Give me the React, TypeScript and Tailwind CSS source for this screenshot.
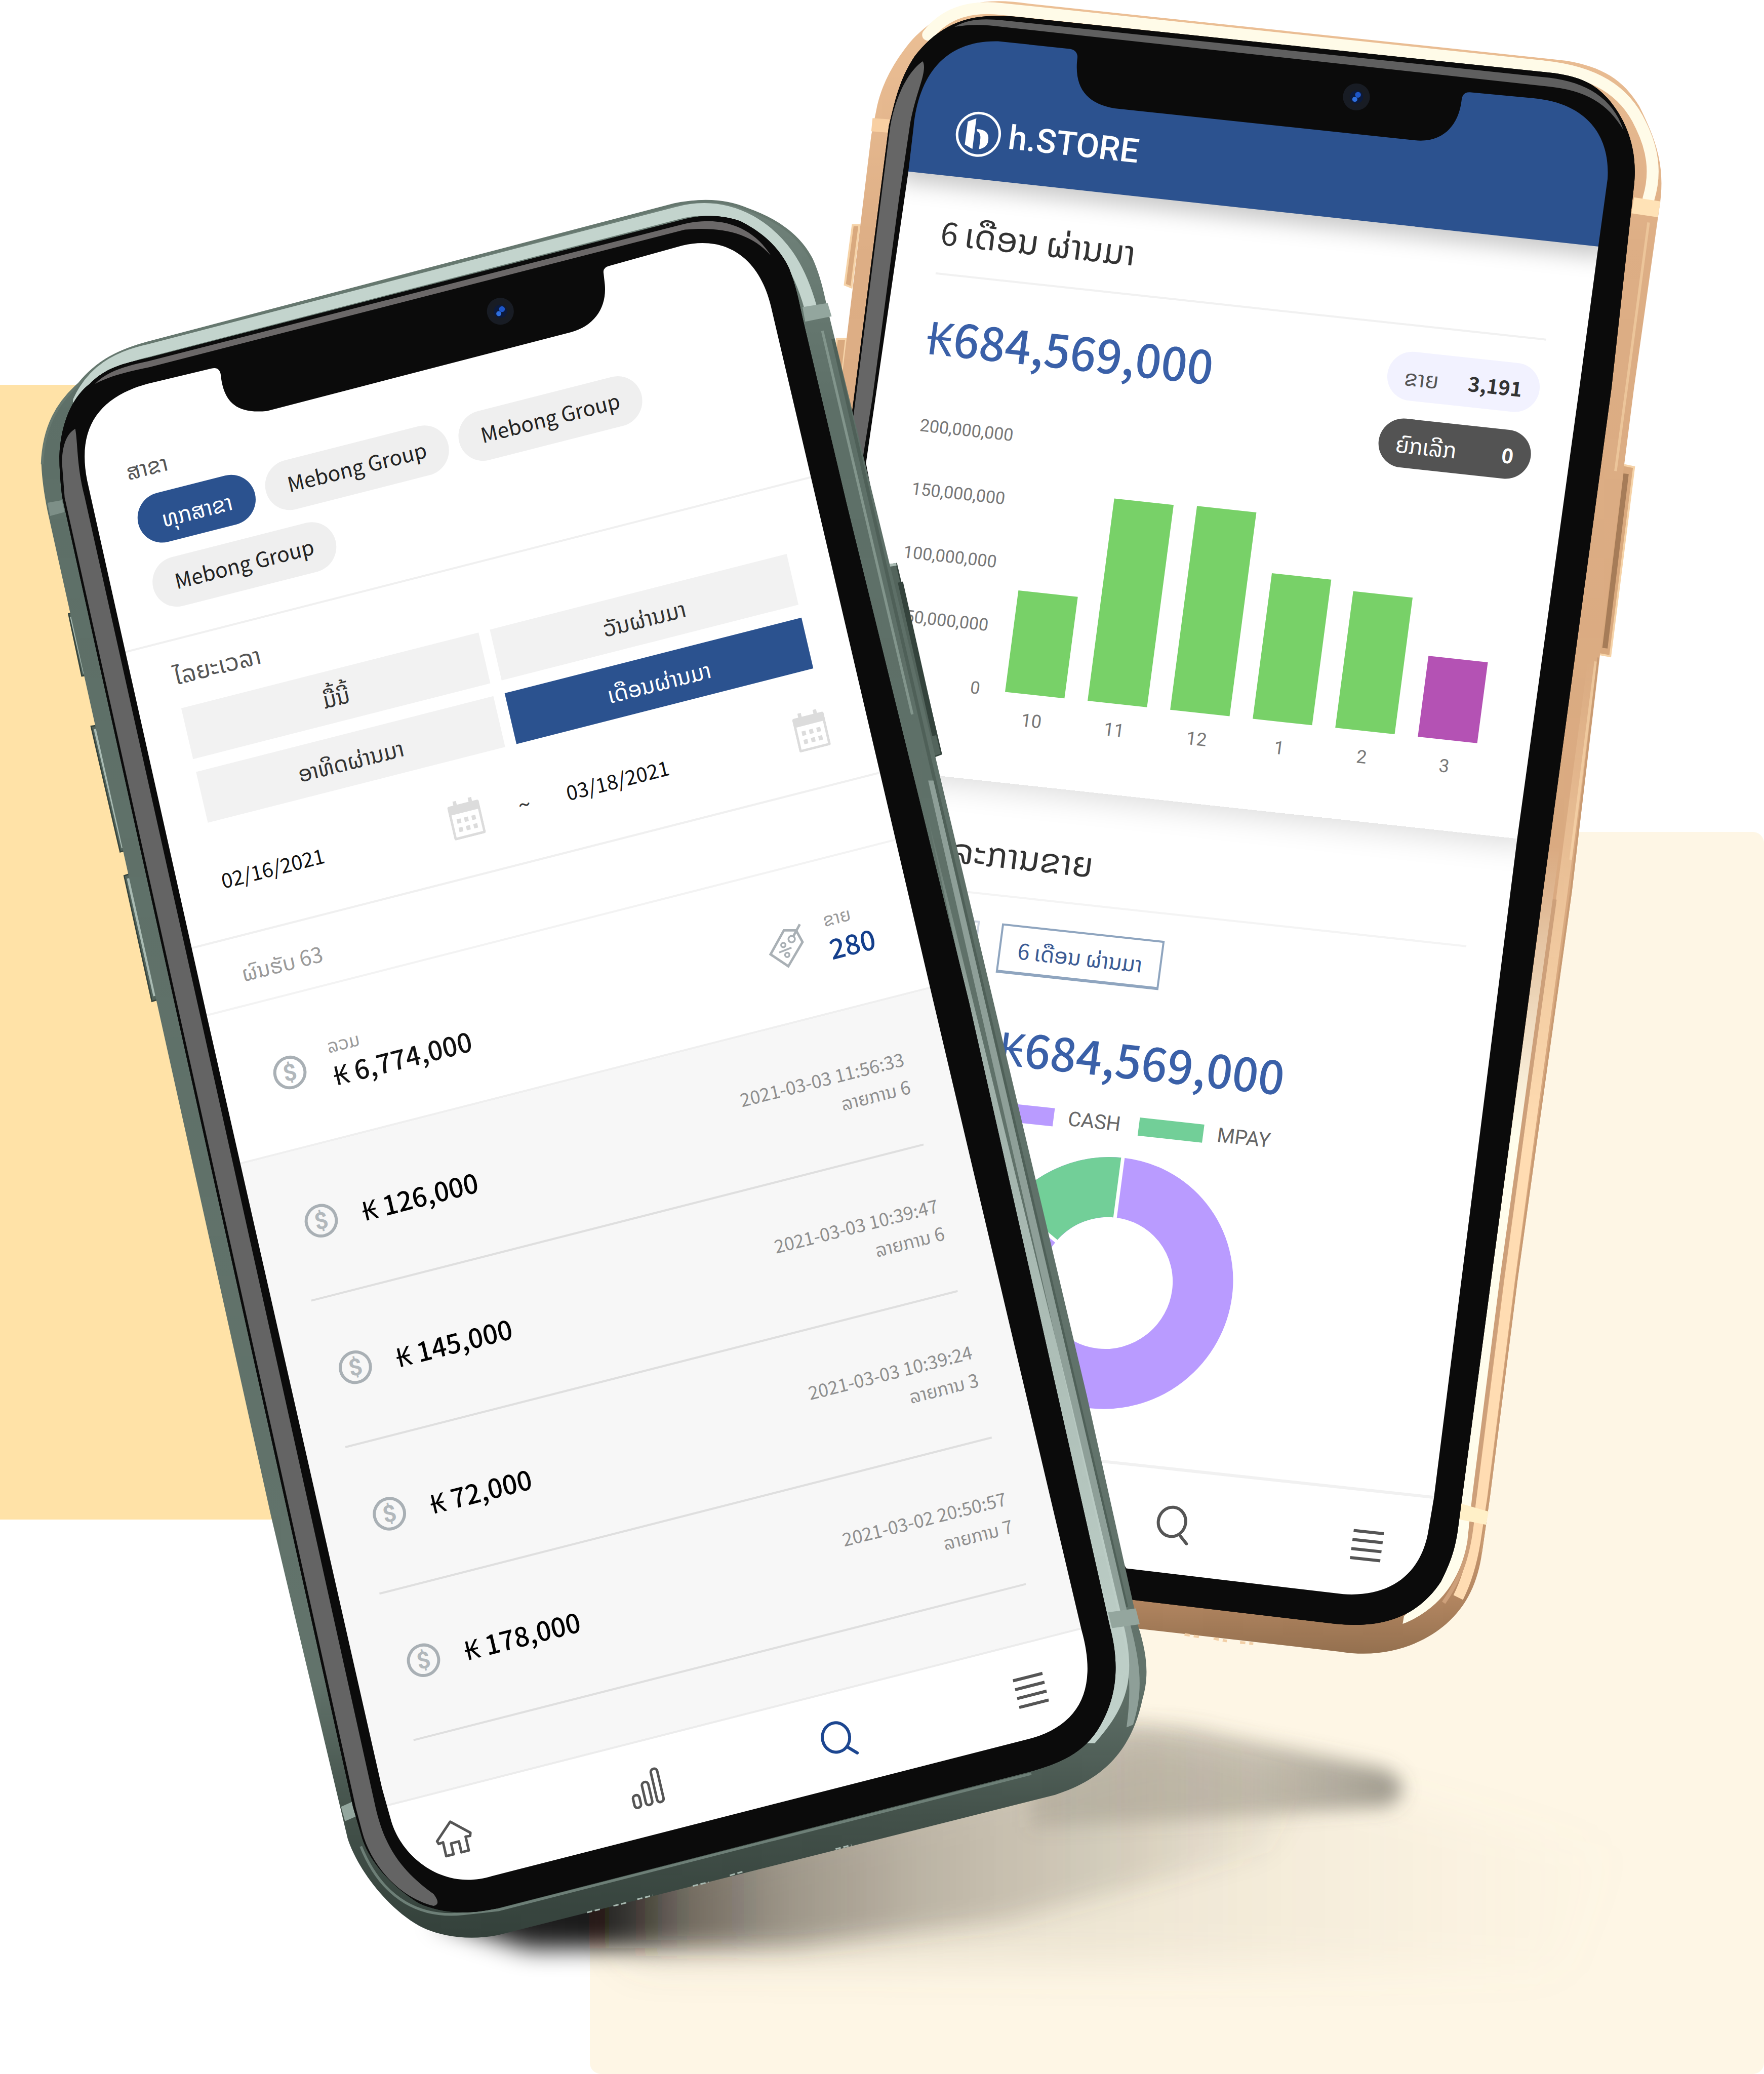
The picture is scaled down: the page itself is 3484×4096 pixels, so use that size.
import type { ReactNode } from "react";

/* ---------- icons ---------- */

function HomeIcon() {
  return (
    <svg viewBox="0 0 76 76" className="h-[76px] w-[76px]" fill="none" stroke="currentColor" strokeWidth="5" strokeLinejoin="round">
      <path d="M38 6 L72 37 L70 43 L61 42 L61 70 L46 70 L46 48 L30 48 L30 70 L15 70 L15 42 L6 43 L4 37 Z" />
    </svg>
  );
}

function BarsIcon() {
  return (
    <svg viewBox="0 0 76 76" className="h-[76px] w-[76px]" fill="none" stroke="currentColor" strokeWidth="5">
      <rect x="8" y="46" width="13" height="25" rx="6" />
      <rect x="31" y="25" width="13" height="46" rx="6" />
      <rect x="54" y="4" width="13" height="67" rx="6" />
    </svg>
  );
}

function SearchIcon() {
  return (
    <svg viewBox="0 0 76 76" className="h-[76px] w-[76px]" fill="none" stroke="currentColor" strokeWidth="6" strokeLinecap="round">
      <ellipse cx="34" cy="33" rx="27" ry="29" />
      <path d="M51 56 L68 73" />
    </svg>
  );
}

function MenuIcon() {
  return (
    <svg viewBox="0 0 76 76" className="h-[76px] w-[76px]" fill="none" stroke="currentColor" strokeWidth="6">
      <path d="M8 11H68M8 29H68M8 47H68M8 65H68" />
    </svg>
  );
}

function CalendarIcon() {
  return (
    <svg viewBox="0 0 64 76" className="h-[76px] w-[64px] shrink-0 text-[#dcdcdc]" fill="currentColor">
      <rect x="13" y="0" width="7" height="16" />
      <rect x="44" y="0" width="7" height="16" />
      <path fillRule="evenodd" d="M4 8H60Q64 8 64 12V72Q64 76 60 76H4Q0 76 0 72V12Q0 8 4 8ZM5 26V71H59V26Z" />
      <rect x="13" y="36" width="8" height="9" />
      <rect x="28" y="36" width="8" height="9" />
      <rect x="43" y="36" width="8" height="9" />
      <rect x="13" y="53" width="8" height="9" />
      <rect x="28" y="53" width="8" height="9" />
      <rect x="43" y="53" width="8" height="9" />
    </svg>
  );
}

function TagIcon() {
  return (
    <svg viewBox="0 0 76 96" className="h-[96px] w-[76px] shrink-0 text-[#a9b0b5]" fill="none" stroke="currentColor" strokeWidth="19">
      <g transform="translate(38 48) rotate(14.3) scale(0.255) translate(-527 -555)">
        <path d="M505 435 H600 L652 525 L545 712 L405 620Z" />
        <circle cx="567" cy="503" r="25" strokeWidth="14" />
        <path d="M580 480 L628 388" />
        <circle cx="503" cy="548" r="17" strokeWidth="14" />
        <circle cx="535" cy="624" r="17" strokeWidth="14" />
        <path d="M472 606 L567 568" strokeWidth="14" />
      </g>
    </svg>
  );
}

function CoinIcon() {
  return (
    <span aria-hidden="true" className="flex h-[66px] w-[66px] shrink-0 items-center justify-center rounded-full border-[6px] border-[#a9b0b5] font-['Roboto',sans-serif] text-[46px] leading-none font-bold text-[#b2b8bc]">
      $
    </span>
  );
}

function Camera({ x, y }: { x: number; y: number }) {
  return (
    <g>
      <circle cx={x} cy={y} r="10.2" fill="#181c24" />
      <circle cx={x} cy={y} r="5" fill="#0c1a3c" />
      <circle cx={x + 1.2} cy={y - 1.6} r="2.2" fill="#1d56c8" />
      <circle cx={x - 1.2} cy={y + 1.8} r="1.9" fill="#2e6fdf" />
    </g>
  );
}

/* ---------- transactions phone ---------- */

const branches = ["Mebong Group", "Mebong Group", "Mebong Group"];

const transactions = [
  { amount: "126,000", time: "2021-03-03 11:56:33", items: 6 },
  { amount: "145,000", time: "2021-03-03 10:39:47", items: 6 },
  { amount: "72,000", time: "2021-03-03 10:39:24", items: 3 },
  { amount: "178,000", time: "2021-03-02 20:50:57", items: 7 },
];

function PeriodButton({ children, active = false }: { children: ReactNode; active?: boolean }) {
  return (
    <button
      className={
        active
          ? "h-[103px] bg-[#2b528f] text-[44px] leading-[60px] text-white"
          : "h-[103px] bg-[#f2f2f2] text-[44px] leading-[60px] text-[#333]"
      }
    >
      {children}
    </button>
  );
}

function DateField({ label, value }: { label: string; value: string }) {
  return (
    <div className="flex flex-1 items-center justify-between">
      <input type="text" aria-label={label} defaultValue={value} className="h-[80px] w-[320px] bg-transparent text-[40px] leading-[60px] text-[#111] outline-none" />
      <CalendarIcon />
    </div>
  );
}

function TransactionsScreen() {
  return (
    <div className="absolute top-[413px] left-[46px] flex h-[3048px] w-[1440px] origin-top-left rotate-[-14.3deg] skew-x-[-1.2deg] flex-col overflow-hidden rounded-[150px] bg-white font-['Noto_Sans_CJK_KR','Noto_Sans_Lao','DejaVu_Sans',sans-serif]">
      <section className="border-b-4 border-[#f0f0f0] px-[103px] pt-[138px] pb-[58px]">
        <h2 className="text-[44px] leading-[60px] text-[#555]">ສາຂາ</h2>
        <div className="mt-[27px] flex flex-wrap gap-x-[22px] gap-y-[31px]">
          <button className="h-[99px] w-[238px] rounded-full bg-[#2b528f] text-[44px] leading-[60px] text-white">ທຸກສາຂາ</button>
          {branches.map((name, i) => (
            <button key={i} className="h-[99px] w-[372px] rounded-full bg-[#efefef] pb-[8px] text-center text-[41px] leading-[60px] text-[#222]">
              {name}
            </button>
          ))}
        </div>
      </section>

      <section className="border-b-4 border-[#f0f0f0] px-[103px] pt-[36px] pb-[73px]">
        <h2 className="text-[47px] leading-[60px] text-[#555]">ໄລຍະເວລາ</h2>
        <div className="mt-[37px] grid grid-cols-2 gap-x-[23px] gap-y-[26px]">
          <PeriodButton>ມື້ນີ້</PeriodButton>
          <PeriodButton>ວັນຜ່ານມາ</PeriodButton>
          <PeriodButton>ອາທິດຜ່ານມາ</PeriodButton>
          <PeriodButton active>ເດືອນຜ່ານມາ</PeriodButton>
        </div>
        <div className="mt-[77px] flex h-[80px] items-center">
          <DateField label="From" value="02/16/2021" />
          <span className="w-[172px] text-center text-[44px] leading-[60px] text-[#333]">~</span>
          <DateField label="To" value="03/18/2021" />
        </div>
      </section>

      <p className="border-b-4 border-[#f3f3f3] px-[101px] pt-[40px] pb-[32px] text-[42px] leading-[60px] text-[#9a9a9a]">
        ຜົນຮັບ 63
      </p>

      <section className="flex h-[300px] items-center border-b-4 border-[#efefef] pr-[105px] pl-[116px]">
        <CoinIcon />
        <div className="ml-[50px] flex-1">
          <p className="text-[36px] leading-[44px] text-[#999]">ລວມ</p>
          <p className="mt-[8px] text-[52px] leading-[60px] font-medium text-[#111]">
            <span className="font-normal">₭</span> 6,774,000
          </p>
        </div>
        <TagIcon />
        <div className="ml-[44px]">
          <p className="text-[36px] leading-[44px] text-[#999]">ຂາຍ</p>
          <p className="mt-[8px] text-[54px] leading-[60px] font-medium text-[#143f8c]">280</p>
        </div>
      </section>

      <ul className="flex-1 bg-[#f7f7f7] pr-[104px] pl-[88px]">
        {transactions.map((t) => (
          <li key={t.time} className="flex h-[297px] items-center border-b-4 border-[#dfdfdf] pl-[22px]">
            <CoinIcon />
            <span className="ml-[50px] flex-1 text-[52px] leading-[60px] font-medium text-black">
              <span className="font-normal">₭</span> {t.amount}
            </span>
            <span className="text-right text-[36px] leading-[56px] text-[#8f8f8f]">
              <time className="block">{t.time}</time>
              <span className="block">ລາຍການ {t.items}</span>
            </span>
          </li>
        ))}
      </ul>

      <nav className="flex h-[201px] items-start justify-between border-t-4 border-[#ececec] bg-white pt-[54px] pr-[104px] pl-[84px] text-[#555]">
        <button aria-label="Home"><HomeIcon /></button>
        <button aria-label="Statistics"><BarsIcon /></button>
        <button aria-label="Search" className="text-[#1c4690]"><SearchIcon /></button>
        <button aria-label="Menu"><MenuIcon /></button>
      </nav>
    </div>
  );
}

function GreenPhone() {
  return (
    <div className="absolute top-[379px] left-[65px] h-[3474px] w-[2220px]">
      <svg viewBox="25 145 850 1330" className="absolute inset-0 h-full w-full" aria-hidden="true">
        <defs>
          <linearGradient id="greenBody" x1="0" y1="0" x2="0" y2="1">
            <stop offset="0" stopColor="#70827a" />
            <stop offset="0.12" stopColor="#5d6f67" />
            <stop offset="0.85" stopColor="#62736b" />
            <stop offset="0.93" stopColor="#43514a" />
            <stop offset="1" stopColor="#34413b" />
          </linearGradient>
          <linearGradient id="greenRail" x1="0" y1="0" x2="0" y2="1">
            <stop offset="0" stopColor="#b9cac3" stopOpacity="0" />
            <stop offset="0.25" stopColor="#b9cac3" stopOpacity="0.7" />
            <stop offset="1" stopColor="#c1d2cb" />
          </linearGradient>
        </defs>
        <g fill="#53645c" stroke="#34433c" strokeWidth="1">
          <path d="M52 464 L57 463 L68 510 L62 511Z" />
          <path d="M69 549 L76 548 L98 642 L91 644Z" />
          <path d="M94 662 L100 660 L122 755 L115 757Z" />
          <path d="M667 428 L678 426 L712 570 L704 573Z" />
        </g>
        <path d="M54 466 L64 509M72 551 L93 641M97 664 L117 753M668 428 L678 426.500" stroke="#a9bbb3" strokeWidth="2" fill="none" />
        <path
          fill="url(#greenBody)"
          d="M31.400 351 C32 322 44 303 60 289 C74 272 90 264 111.600 258.300 L510.500 153.800 C532 149 550 151 565 157 C588 166 606 178 615 196 C622 212 624 226 627 238 L674 431 L822 1055 L861 1230 C868 1252 869 1268 864 1285 C856 1322 836 1345 798 1357 L377 1463 C352 1468 330 1463 317 1456 C292 1442 270 1412 263 1390 L205 1146 L36 386 Q32 366 31.400 351Z"
        />
        <path d="M32 351 C33 322 44 304 60 290 C74 273 90 265 112 259 L510 154.500 C532 150 550 151.500 565 158 C588 166 606 179 614 197" fill="none" stroke="#66786f" strokeWidth="2" />
        {/* polished chamfer along the top */}
        <path d="M60 303 C70 281 88 270 114 264.500 L512 161 C534 155 552 159 567 167 C590 180 604 200 613 232" fill="none" stroke="#c3d4cd" strokeWidth="9.500" strokeLinecap="round" />
        {/* right rail */}
        <path d="M630 256 L700 560 L852 1215" fill="none" stroke="#4f6058" strokeWidth="2.500" />
        <path d="M622 250 L690 540" fill="none" stroke="#82958c" strokeWidth="2" />
        <path d="M681 440 L707 556" fill="none" stroke="#34433c" strokeWidth="4" />
        <path d="M706 590 L854 1225 C864 1262 864 1280 857 1304 L852 1306 C857 1270 852 1250 848 1230 L702 590Z" fill="#8e9f98" />
        <path d="M700 610 L810 1060 L849 1225 C860 1268 853 1290 828 1318 L822 1318 C846 1280 848 1262 836 1225 L794 1045Z" fill="url(#greenRail)" />
        <path d="M607 232 L626 229 L629 239 L609 243Z" fill="#93a69e" />
        <path d="M838 1219 L859 1216 L862 1228 L841 1231Z" fill="#94a69e" />
        <path d="M36 380 L47 378 L49 387 L38 390Z" fill="#7d8f87" />
        <path d="M258 1366 L267 1362 L270 1373 L261 1377Z" fill="#93a69e" />
        <path d="M273 1396 C290 1438 320 1450 350 1447 L377 1444 L780 1341" fill="none" stroke="#6d7f77" strokeWidth="2" />
        <path d="M444 1446 L454 1443.500M464 1441 L474 1438.500M482 1436 L494 1433M524 1426 L536 1423M552 1418 L562 1415M632 1398 L644 1395" stroke="#a7b8b0" strokeWidth="1.200" strokeDasharray="4 2" fill="none" />
        <path
          fill="#0b0b0b"
          d="M45 345 C46 318 56 299 68 290 C80 278 92 275 111.600 270.500 L516 166 C530 162 546 162 560 167 C578 176 590 188 597 203 C602 216 604 226 607 240 L640.400 381 L733 758 L839.500 1230 C848 1262 843 1286 832 1305 C820 1326 800 1334 777 1340 L377 1442.600 C350 1449 330 1445 317 1439 C296 1426 280 1408 274 1390 L267 1366 L47 375 Q45 358 45 345Z"
        />
      </svg>

      <TransactionsScreen />

      <svg viewBox="25 145 850 1330" className="pointer-events-none absolute inset-0 h-full w-full" aria-hidden="true">
        <path
          fill="#0b0b0b"
          fillRule="evenodd"
          d="M45 345 C46 318 56 299 68 290 C80 278 92 275 111.600 270.500 L516 166 C530 162 546 162 560 167 C578 176 590 188 597 203 C602 216 604 226 607 240 L640.400 381 L733 758 L839.500 1230 C848 1262 843 1286 832 1305 C820 1326 800 1334 777 1340 L377 1442.600 C350 1449 330 1445 317 1439 C296 1426 280 1408 274 1390 L267 1366 L47 375 Q45 358 45 345Z
          M66 363 C58 322 76 300 111.600 290 L160 278.500 Q166 277 167 283 C169 303 178 313 202 310.600 L432 251 C450 246 459 232 457.500 215 L456.500 206 Q456 202 461 200.800 L516 185.500 C552 177 575 198 583 231 L613.300 360.400 L703.700 747.600 L818 1232.500 C830 1275 818 1303 781 1314 L372 1418.500 C335 1430 304 1404 296 1377 L289 1352 L157 770 L95 493Z"
        />
        <path d="M72 290 C82 280 94 277 112 273 L516 169.500 C546 162 570 172 583 193 C568 176 546 171 518 173.500 L113 277.500 C96 281 84 284 72 290Z" fill="#6b6868" />
        <path d="M47 350 C47 338 50 328 57 324 C59 334 58 352 64 375 L152 770 L284 1366 C290 1392 300 1412 328 1432 Q334 1440 328 1441 C300 1434 280 1408 274 1385 L269 1366 L49 376Z" fill="#646464" />
        <Camera x={378.5} y={235.2} />
      </svg>
    </div>
  );
}

/* ---------- dashboard phone ---------- */

const axis = ["200,000,000", "150,000,000", "100,000,000", "50,000,000", "0"];

const months = [
  { label: "10", value: 80, color: "#78d168" },
  { label: "11", value: 160, color: "#78d168" },
  { label: "12", value: 161, color: "#78d168" },
  { label: "1", value: 115, color: "#78d168" },
  { label: "2", value: 108, color: "#78d168" },
  { label: "3", value: 64, color: "#b452b4" },
];

function BarChart() {
  return (
    <div className="flex">
      <div className="flex w-[194px] flex-col items-end text-[34px] leading-[126px] text-[#777]">
        {axis.map((a) => (
          <span key={a}>{a}</span>
        ))}
      </div>
      <div className="mt-[65px] ml-[50px]">
        <div className="flex h-[504px] items-end gap-[46px]">
          {months.map((m) => (
            <div key={m.label} className="w-[118px]" style={{ height: `${m.value / 2}%`, backgroundColor: m.color }} />
          ))}
        </div>
        <div className="mt-[30px] flex gap-[46px] text-[36px] leading-[44px] text-[#777]">
          {months.map((m) => (
            <span key={m.label} className="w-[118px] text-center">{m.label}</span>
          ))}
        </div>
      </div>
    </div>
  );
}

function Donut() {
  return (
    <svg viewBox="-250 -250 500 500" className="mx-auto h-[500px] w-[500px]" role="img" aria-label="CASH and MPAY share">
      <circle r="190" fill="none" stroke="#b99bff" strokeWidth="119" />
      <path d="M0 -190 A190 190 0 0 0 -159 -104" fill="none" stroke="#72cf98" strokeWidth="119" />
      <path d="M0 -128 V-252 M-107 -70 L-211 -138" stroke="#fff" strokeWidth="7" />
    </svg>
  );
}

function Logo() {
  return (
    <a href="#" className="flex items-center gap-[14px] text-white">
      <svg viewBox="0 0 92 92" className="h-[92px] w-[92px]" aria-hidden="true">
        <circle cx="46" cy="46" r="42" fill="none" stroke="currentColor" strokeWidth="5" />
        <path fill="currentColor" d="M22 23 L38 15 V76 L22 69Z" />
        <path fill="currentColor" d="M42 36 Q67 34 67 56 Q67 70 51 75 V56 Q51 42 42 40Z" />
      </svg>
      <span className="font-['Roboto',sans-serif] text-[66px] leading-[80px] font-medium">h.STORE</span>
    </a>
  );
}

function Amount({ children }: { children: ReactNode }) {
  return (
    <p className="text-[90px] leading-[110px] font-medium text-[#3a60a8]">
      <span className="font-normal">₭</span>
      {children}
    </p>
  );
}

function DashboardScreen() {
  return (
    <div className="absolute top-[51px] left-[180px] flex h-[3006px] w-[1413px] origin-top-left rotate-[6.2deg] skew-x-[-1.3deg] flex-col overflow-hidden rounded-[150px] bg-white font-['Noto_Sans_CJK_KR','Noto_Sans_Lao','DejaVu_Sans',sans-serif]">
      <header className="relative flex h-[293px] shrink-0 items-end bg-[#2c528f] pb-[42px] pl-[102px] shadow-[0_20px_44px_rgba(0,0,0,0.22)]">
        <Logo />
      </header>

      <section className="h-[1180px] shrink-0 px-[100px] pt-[68px] shadow-[0_12px_60px_rgba(0,0,0,0.14)]">
        <h2 className="h-[128px] border-b-4 border-[#f1f1f1] text-[62px] leading-[80px] text-[#333]">
          6 <span className="text-[68px]">ເດືອນ ຜ່ານມາ</span>
        </h2>
        <div className="mt-[50px] flex items-start justify-between">
          <div className="mt-[14px]">
            <Amount>684,569,000</Amount>
          </div>
          <dl className="grid w-[302px] gap-[36px] text-[40px] leading-[60px]">
            <div className="flex h-[97px] items-center justify-between rounded-full bg-[#f2f2ff] px-[34px]">
              <dt className="text-[44px] text-[#555]">ຂາຍ</dt>
              <dd className="font-bold text-[#333]">3,191</dd>
            </div>
            <div className="flex h-[97px] items-center justify-between rounded-full bg-[#535353] px-[34px] text-white">
              <dt className="text-[44px]">ຍົກເລີກ</dt>
              <dd className="font-bold">0</dd>
            </div>
          </dl>
        </div>
        <div className="-mt-[44px] font-['Roboto',sans-serif]">
          <BarChart />
        </div>
      </section>

      <section className="flex-1 px-[100px] pt-[98px]">
        <h2 className="h-[126px] border-b-4 border-[#f4f4f4] pl-[76px] text-[68px] leading-[80px] text-[#333]">ລາຍລະການຂາຍ</h2>
        <div className="mt-[52px] flex gap-[44px] text-[43px] leading-[60px] text-[#3a5a94]">
          <button className="h-[98px] w-[254px] border-4 border-[#cfd6e3]">ມື້ນີ້</button>
          <button className="h-[98px] w-[323px] border-4 border-b-[6px] border-[#8fa5bf] whitespace-nowrap">
            6 ເດືອນ ຜ່ານມາ
          </button>
        </div>
        <div className="mt-[86px] flex justify-center">
          <Amount>684,569,000</Amount>
        </div>
        <ul className="mt-[52px] flex items-center justify-center gap-[36px] pr-[12px] font-['Roboto',sans-serif] text-[40px] leading-[48px] text-[#666]">
          <li className="flex items-center gap-[28px]">
            <span className="h-[36px] w-[128px] bg-[#b99bff]" />
            CASH
          </li>
          <li className="flex items-center gap-[28px]">
            <span className="h-[36px] w-[128px] bg-[#72cf98]" />
            MPAY
          </li>
        </ul>
        <div className="mt-[40px] pr-[24px]">
          <Donut />
        </div>
      </section>

      <nav className="flex h-[225px] shrink-0 items-start justify-between border-t-[6px] border-[#f1f1f1] pt-[68px] pr-[102px] pl-[84px] text-[#555]">
        <button aria-label="Home"><HomeIcon /></button>
        <button aria-label="Statistics"><BarsIcon /></button>
        <button aria-label="Search"><SearchIcon /></button>
        <button aria-label="Menu"><MenuIcon /></button>
      </nav>
    </div>
  );
}

function GoldPhone() {
  return (
    <div className="absolute -top-[5px] left-[1632px] h-[3291px] w-[1671px]">
      <svg viewBox="625 -2 640 1260" className="absolute inset-0 h-full w-full" aria-hidden="true">
        <defs>
          <linearGradient id="goldBody" x1="0" y1="0" x2="0" y2="1">
            <stop offset="0" stopColor="#ecc096" />
            <stop offset="0.15" stopColor="#ddae85" />
            <stop offset="0.88" stopColor="#d6a67c" />
            <stop offset="0.96" stopColor="#b88a64" />
            <stop offset="1" stopColor="#94704f" />
          </linearGradient>
          <linearGradient id="peachRail" gradientUnits="userSpaceOnUse" x1="0" x2="0" y1="500" y2="860">
            <stop offset="0" stopColor="#ffdcb2" stopOpacity="0" />
            <stop offset="1" stopColor="#ffdcb2" />
          </linearGradient>
          <linearGradient id="brightRail" gradientUnits="userSpaceOnUse" x1="0" x2="0" y1="640" y2="860">
            <stop offset="0" stopColor="#fffdec" stopOpacity="0" />
            <stop offset="1" stopColor="#fffdec" />
          </linearGradient>
        </defs>
        <g fill="#d9a97e" stroke="#f6d3a8" strokeWidth="1.500">
          <path d="M645 170 L650 170 L644 217 L639 215Z" />
          <path d="M633 256 L640 256 L635 300 L628 300Z" />
          <path d="M1226 351 L1236 353 L1218 496 L1207 494Z" />
        </g>
        <path d="M1230 358 L1214 490" stroke="#a67c58" strokeWidth="4" />
        <path
          fill="url(#goldBody)"
          d="M749.500 0.700 C722 2 700 18 688 32 C672 52 666 68 663 82 L659 102 L635 300 L600 560 L800 1224 L861 1231.600 L1013.400 1249 C1050 1255 1078 1242 1094 1228 C1110 1214 1118 1196 1121 1174 L1127 1132 L1148 967 L1189 674 L1210 497 L1236 293 L1255 158 C1260 128 1254 108 1240 80 C1228 60 1212 50 1184 45.500 L777.600 2.400 Q762 0 749.500 0.700Z"
        />
        <path d="M702 26 C716 8 736 4 758 6.500 L1168 50 C1206 54 1229 68 1241 94 C1250 112 1253 130 1247 150" fill="none" stroke="#fffbe8" strokeWidth="9" strokeLinecap="round" />
        {/* right rail */}
        <path d="M1247 168 L1222 356M1207 500 L1188 650" fill="none" stroke="#ecc59a" strokeWidth="2" />
        <path d="M1205 500 L1181 680 L1142 967 L1121 1132 L1116 1165 Q1112 1190 1103 1208" fill="none" stroke="url(#peachRail)" strokeWidth="8" />
        <path d="M1176 680 L1136 967 L1115 1132 C1113 1172 1106 1192 1092 1212" fill="none" stroke="#cda07a" strokeWidth="3" />
        <path d="M1172 640 L1128 967 L1106 1132 C1102 1170 1090 1200 1062 1222 L1061 1228 C1092 1216 1106 1190 1110 1165 L1113.500 1132 L1134.500 967 L1180 640Z" fill="url(#brightRail)" />
        <path d="M1209 497 L1188.300 674 L1147.300 967 L1126.300 1132 L1120.300 1174" fill="none" stroke="#c99b73" strokeWidth="1.500" />
        <path d="M1236 149 L1256 152 L1254 164 L1234 161Z" fill="#ffe2b6" />
        <path d="M1105 1137 L1126 1143 L1124 1153 L1104 1149Z" fill="#fff0c8" />
        <path d="M660 89 L673 90 L672 100 L659 99Z" fill="#f8cfa2" />
        <path d="M896 1236 L908 1238M918 1239 L928 1241M938 1242 L948 1243" stroke="#f2cfa6" strokeWidth="2" strokeDasharray="4 3" />
        <path
          fill="#0b0b0b"
          d="M751.500 11.700 C724 12 706 24 692 42 C680 60 677 76 672.300 95 L647 292 L620 500 L800 1203 L858 1210 L1010 1228 C1050 1232 1074 1220 1090 1196 C1098 1180 1101 1170 1103 1155 L1128 967 L1167.200 674 L1219 293 L1236 140 C1239 112 1230 90 1216 74 C1206 63 1196 58 1176 55 L775 13 Q762 11.500 751.500 11.700Z"
        />
      </svg>

      <DashboardScreen />

      <svg viewBox="625 -2 640 1260" className="pointer-events-none absolute inset-0 h-full w-full" aria-hidden="true">
        <path
          fill="#0b0b0b"
          fillRule="evenodd"
          d="M751.500 11.700 C724 12 706 24 692 42 C680 60 677 76 672.300 95 L647 292 L620 500 L800 1203 L858 1210 L1010 1228 C1050 1232 1074 1220 1090 1196 C1098 1180 1101 1170 1103 1155 L1128 967 L1167.200 674 L1219 293 L1236 140 C1239 112 1230 90 1216 74 C1206 63 1196 58 1176 55 L775 13 Q762 11.500 751.500 11.700Z
          M687 130 L691 96 C695 56 715 30 755 30.900 L808 36.500 Q815 37 815 43 C812 66 822 78 843 81.600 L1070 105.800 C1090 108 1103 96 1105.500 76 Q1106 69 1112 69.500 L1160 74 C1202 78 1218 104 1216 135 L1209 186 L1194.700 293 L1147.500 635 L1084.600 1132.800 L1080 1160 C1074 1190 1052 1208 1016 1205.500 L852 1186 L800 1100 L655 350Z"
        />
        <path d="M722 20 C732 14 744 13.500 758 15 L1172 58.500 C1200 62 1220 74 1228 98 C1216 78 1200 68 1170 65 L758 20 Q738 17 722 20Z" fill="#5f5f5f" />
        <path d="M698 46 C702 54 692 70 688 96 L680 150 L660 300 L652 350 L641 350 L673 98 C676 76 686 54 698 46Z" fill="#666" />
        <Camera x={1026} y={73} />
      </svg>
    </div>
  );
}

/* ---------- ground shadow ---------- */

function GroundShadow() {
  return (
    <svg viewBox="280 1220 1000 348" className="absolute top-[3186px] left-[731px] h-[909px] w-[2612px]" aria-hidden="true">
      <defs>
        <filter id="wideBlur" x="-30%" y="-60%" width="160%" height="220%">
          <feGaussianBlur stdDeviation="16" />
        </filter>
        <filter id="softBlur" x="-30%" y="-60%" width="160%" height="220%">
          <feGaussianBlur stdDeviation="9" />
        </filter>
        <filter id="tipBlur" x="-30%" y="-60%" width="160%" height="220%">
          <feGaussianBlur stdDeviation="7" />
        </filter>
        <linearGradient id="wide" gradientUnits="userSpaceOnUse" x1="450" x2="1240" y1="0" y2="0">
          <stop offset="0" stopColor="#6b6354" stopOpacity="0.22" />
          <stop offset="0.5" stopColor="#8a8068" stopOpacity="0.14" />
          <stop offset="1" stopColor="#b9ad90" stopOpacity="0" />
        </linearGradient>
        <linearGradient id="near" gradientUnits="userSpaceOnUse" x1="330" x2="1000" y1="0" y2="0">
          <stop offset="0" stopColor="#000" stopOpacity="0.85" />
          <stop offset="0.19" stopColor="#080706" stopOpacity="0.9" />
          <stop offset="0.28" stopColor="#29241e" stopOpacity="0.62" />
          <stop offset="0.4" stopColor="#3c362e" stopOpacity="0.42" />
          <stop offset="0.55" stopColor="#4a443a" stopOpacity="0.28" />
          <stop offset="0.8" stopColor="#5a5347" stopOpacity="0.15" />
          <stop offset="1" stopColor="#5a5347" stopOpacity="0" />
        </linearGradient>
        <linearGradient id="far" gradientUnits="userSpaceOnUse" x1="780" x2="1060" y1="0" y2="0">
          <stop offset="0" stopColor="#6b6559" stopOpacity="0.2" />
          <stop offset="0.6" stopColor="#6b6559" stopOpacity="0.34" />
          <stop offset="1" stopColor="#5a5850" stopOpacity="0.58" />
        </linearGradient>
      </defs>
      <path d="M460 1430 L880 1320 L1220 1400 L1180 1490 L480 1480Z" fill="url(#wide)" filter="url(#wideBlur)" />
      <path d="M328 1452 L560 1385 L860 1310 L1000 1340 L960 1400 L760 1452 L600 1472 L400 1474Z" fill="url(#near)" filter="url(#softBlur)" />
      <path d="M780 1296 L900 1306 L1048 1338 Q1072 1352 1050 1366 L900 1376 L780 1382Z" fill="url(#far)" filter="url(#tipBlur)" />
    </svg>
  );
}

export default function App() {
  return (
    <main className="relative min-h-screen w-full overflow-hidden bg-white">
      <div className="absolute top-[760px] left-0 h-[2241px] w-[1000px] bg-[#ffe2a7]" />
      <div className="absolute top-[1643px] right-0 bottom-0 left-[1165px] rounded-[22px] bg-[#fef6e5]" />
      <GroundShadow />
      <GoldPhone />
      <GreenPhone />
    </main>
  );
}
